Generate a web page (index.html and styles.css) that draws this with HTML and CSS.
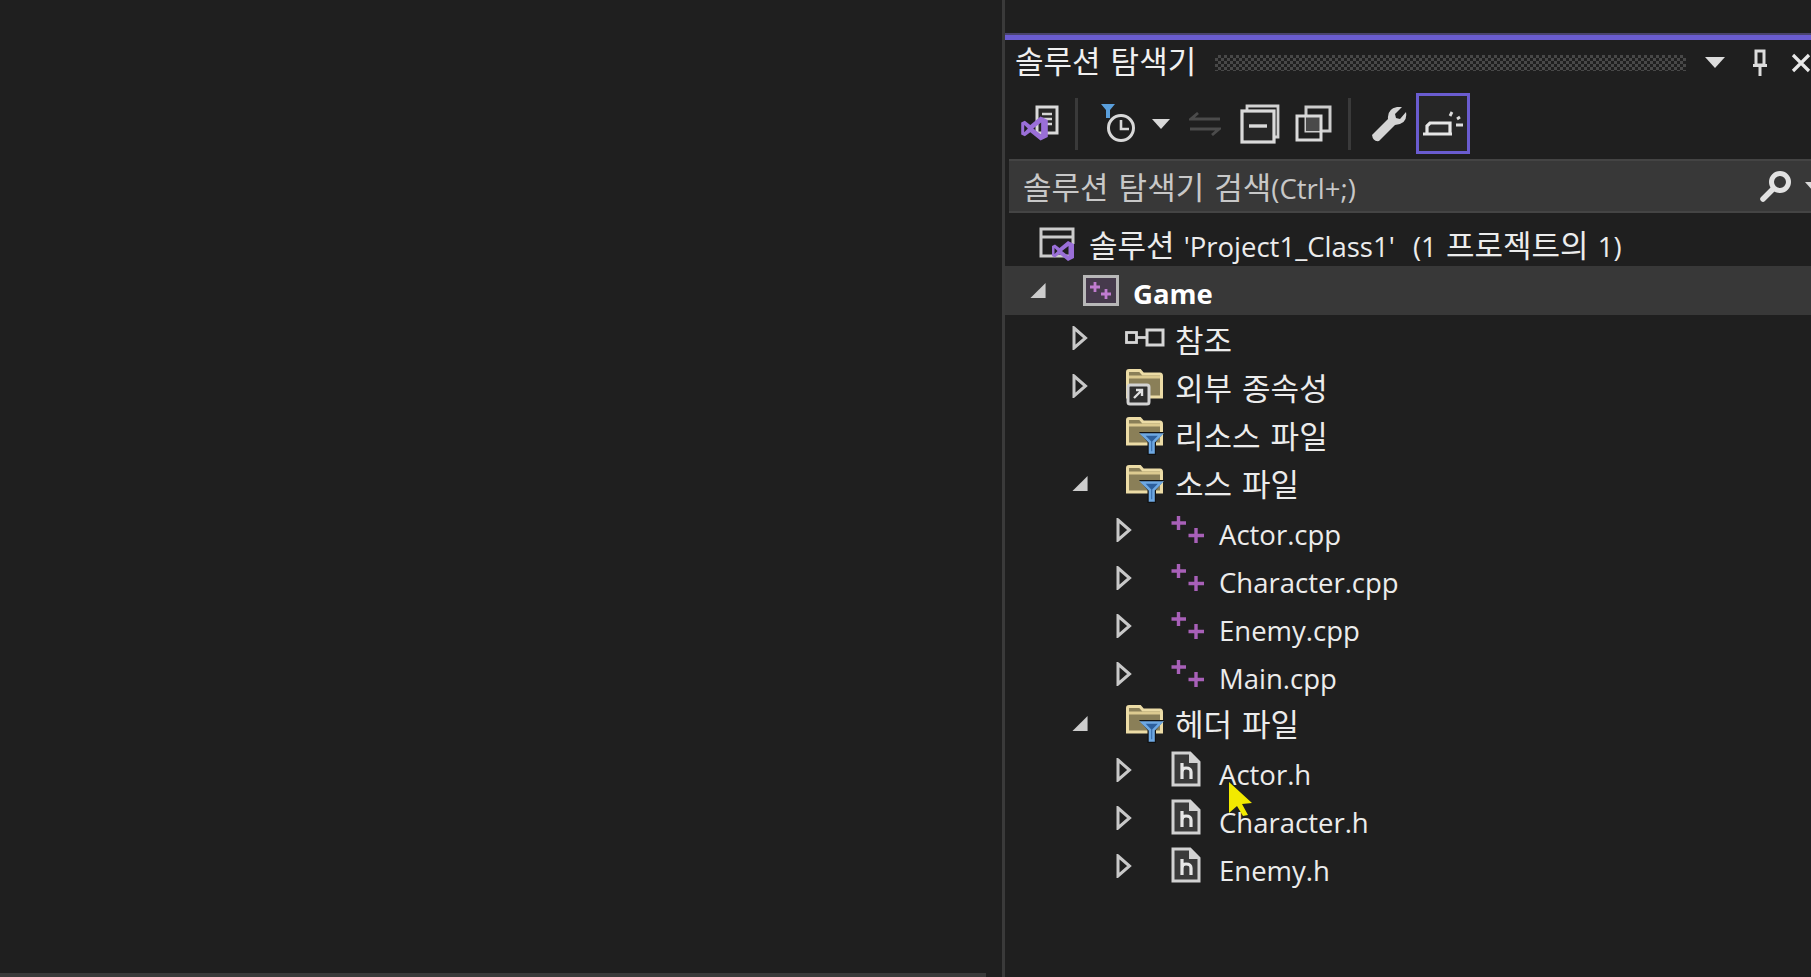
FILE: index.html
```html
<!DOCTYPE html>
<html lang="ko">
<head>
<meta charset="utf-8">
<title>솔루션 탐색기</title>
<link rel="stylesheet" href="styles.css">
</head>
<body>
<svg class="defs" aria-hidden="true">
  <symbol id="vs" viewBox="0 0 24 24"><path d="M17 2 L23 5 V19 L17 22 L8.500 15 L4 18.500 L1 17 V7 L4 5.500 L8.500 9 Z M17.500 7 L11 12 L17.500 17 Z M3.500 9 V15 L6.500 12 Z" fill="#9a6fd8" fill-rule="evenodd"/></symbol>
  <symbol id="tri-open" viewBox="0 0 18 18"><path d="M16.500 1 V17 H0.500 Z" fill="#cdcdcd"/></symbol>
  <symbol id="tri-closed" viewBox="0 0 16 24"><path d="M2 2 L13.500 12 L2 22 Z" fill="none" stroke="#c8c8c8" stroke-width="3"/></symbol>
  <symbol id="cpp" viewBox="0 0 36 32"><path d="M8.500 1 V15 M1.500 8 H16 M26 13 V28 M18.500 20.500 H34" stroke="#a860b8" stroke-width="3.400" fill="none"/></symbol>
  <symbol id="header" viewBox="0 0 30 36"><path d="M2 2 H19 L28 11 V34 H2 Z" fill="#3a3a3a" stroke="#d2d2d2" stroke-width="3"/><path d="M19 2 V11 H28" fill="#d2d2d2" stroke="#d2d2d2" stroke-width="2"/><path d="M11 12 V28 M11 21 Q11 17 15 17 Q20 17 20 21 V28" fill="none" stroke="#e6e6e6" stroke-width="3.200"/></symbol>
  <symbol id="folder-f" viewBox="0 0 38 38"><path d="M1.500 27 V3 Q1.500 1.500 3 1.500 H14 L17 5 H34 Q35.500 5 35.500 7 V27 Z" fill="#8a7f58" stroke="#ecdca6" stroke-width="3"/><path d="M3 8 H34" stroke="#dcca90" stroke-width="3"/><path d="M13 15 H38 L30 25 V38 H21.500 V25 Z" fill="#111"/><path d="M16.500 17.500 H35 L27.500 25 V35.500 H24 V25 Z" fill="#2d5f9c" stroke="#6ea8e2" stroke-width="2.600"/></symbol>
  <symbol id="clock" viewBox="0 0 38 42"><circle cx="20" cy="25" r="12.500" fill="none" stroke="#d8d8d8" stroke-width="3"/><path d="M20 17 V26 H28" fill="none" stroke="#d8d8d8" stroke-width="2.600"/><path d="M0 1 H14 L9 7 V15 H5 V7 Z" fill="#5a9fdc"/></symbol>
</svg>

<div class="editor">
  <div class="strip"></div>
</div>

<aside class="panel">
  <div class="accent"></div>

  <header class="title">
    <span class="title-text ko">솔루션 탐색기</span>
    <div class="grip"></div>
    <svg class="title-caret" viewBox="0 0 20 11"><path d="M0 0 H20 L10 11 Z" fill="#dcdcdc"/></svg>
    <svg class="title-pin" viewBox="0 0 18 28"><path d="M5 2 H13 V16 H5 Z M2 16.500 H16 M9 17 V27" fill="none" stroke="#dcdcdc" stroke-width="3"/></svg>
    <svg class="title-close" viewBox="0 0 20 20"><path d="M2 2 L18 18 M18 2 L2 18" stroke="#e8e8e8" stroke-width="3.200" fill="none"/></svg>
  </header>

  <nav class="toolbar">
    <svg class="t-home" viewBox="0 0 40 38">
      <path d="M17 2 H37 V28 H17 Z" fill="#262626" stroke="#dadada" stroke-width="3"/>
      <path d="M22 9 H32 M22 14 H32 M22 19 H32" stroke="#d4d4d4" stroke-width="2.600" fill="none"/>
      <use href="#vs" x="0" y="9" width="29" height="29"/>
    </svg>
    <div class="sep sep-a"></div>
    <svg class="t-clock"><use href="#clock"/></svg>
    <svg class="t-caret" viewBox="0 0 18 10"><path d="M0 0 H18 L9 10 Z" fill="#d8d8d8"/></svg>
    <svg class="t-sync" viewBox="0 0 32 24"><path d="M9 1 L2 7 H31 M23 23 L30 17 H1" fill="none" stroke="#4b4b4b" stroke-width="2.800"/></svg>
    <svg class="t-collapse" viewBox="0 0 40 40">
      <path d="M7 6 V2 H38 V33 H34" fill="none" stroke="#d2d2d2" stroke-width="2.800"/>
      <rect x="2" y="7" width="32" height="31" fill="#262626" stroke="#dadada" stroke-width="3.200"/>
      <path d="M9 22 H27" stroke="#dadada" stroke-width="3.400"/>
    </svg>
    <svg class="t-copy" viewBox="0 0 37 37">
      <rect x="11" y="2" width="24" height="24" fill="none" stroke="#cccccc" stroke-width="3"/>
      <rect x="11" y="11" width="15" height="15" fill="#4a4a4a"/>
      <rect x="2" y="11" width="24" height="24" fill="none" stroke="#dadada" stroke-width="3"/>
    </svg>
    <div class="sep sep-b"></div>
    <svg class="t-wrench" viewBox="0 0 36 36"><path d="M1 29 L17 13 Q16 3 26 1 L31 1 L24 8 L25 12 L29 13 L35 6 Q37 18 24 19 L8 35 Q2 36 1 29 Z" fill="#d4d4d4"/></svg>
    <button class="focus-btn">
      <svg class="t-focus" viewBox="0 0 42 26"><path d="M1 23 H30 M5 22 V15 L8 12 H28 V22" fill="#2c2c2c" stroke="#e6e6e6" stroke-width="3.200"/><path d="M28 5 L30 1 M35 8 L38 6 M34 14 H41" stroke="#dcdcdc" stroke-width="2.800" fill="none"/></svg>
    </button>
  </nav>

  <div class="search">
    <span class="search-text"><span class="ko">솔루션 탐색기 검색</span>(Ctrl+;)</span>
    <svg class="search-icon" viewBox="0 0 32 32"><circle cx="20" cy="12" r="8.500" fill="none" stroke="#e2e2e2" stroke-width="5"/><path d="M13 19 L3 29" stroke="#e2e2e2" stroke-width="5.500" stroke-linecap="round"/></svg>
    <svg class="search-caret" viewBox="0 0 16 9"><path d="M0 0 H16 L8 9 Z" fill="#d8d8d8"/></svg>
  </div>

  <ul class="tree">
    <li class="row row-solution">
      <svg class="ico-solution" viewBox="0 0 36 36">
        <path d="M30 29 H2 V2 H34 V17 M2 10 H34" fill="none" stroke="#cccccc" stroke-width="3"/>
        <use href="#vs" x="12" y="12" width="24" height="24"/>
      </svg>
      <span class="lbl lbl-solution"><span class="ko">솔루션</span> 'Project1_Class1' &nbsp;(1 <span class="ko">프로젝트의</span> 1)</span>
    </li>

    <li class="row row-project">
      <svg class="tw tw-open lv0-tw"><use href="#tri-open"/></svg>
      <svg class="ico-project" viewBox="0 0 36 31">
        <rect x="1.500" y="1.500" width="33" height="28" fill="#463a4c" stroke="#b8b8b8" stroke-width="3"/>
        <path d="M12 7 V17 M7 12 H17 M23 14 V24 M18 19 H28" stroke="#c07cd0" stroke-width="2.800" fill="none"/>
      </svg>
      <span class="lbl lbl-bold">Game</span>
    </li>

    <li class="row lv1">
      <svg class="tw tw-closed"><use href="#tri-closed"/></svg>
      <svg class="ico-ref" viewBox="0 0 40 20"><rect x="1.500" y="4.500" width="10" height="10" fill="none" stroke="#d6d6d6" stroke-width="2.800"/><path d="M12 9.500 H22" stroke="#d6d6d6" stroke-width="2.800"/><rect x="22" y="2" width="16" height="15" fill="none" stroke="#d6d6d6" stroke-width="3"/></svg>
      <span class="lbl lbl-ko ko">참조</span>
    </li>

    <li class="row lv1">
      <svg class="tw tw-closed"><use href="#tri-closed"/></svg>
      <svg class="ico-folder" viewBox="0 0 38 38">
        <path d="M1.500 24 V3 Q1.500 1.500 3 1.500 H14 L17 5 H34 Q35.500 5 35.500 7 V28 H1.500 Z" fill="#8a7f58" stroke="#ecdca6" stroke-width="3"/>
        <path d="M3 8 H34" stroke="#dcca90" stroke-width="3"/>
        <rect x="2" y="16" width="21" height="19" rx="2" fill="#2e2e2e" stroke="#d2d2d2" stroke-width="3"/>
        <path d="M8 29 L16 21 M10 21 H16 V27" fill="none" stroke="#e0e0e0" stroke-width="2.400"/>
      </svg>
      <span class="lbl lbl-ko ko">외부 종속성</span>
    </li>

    <li class="row lv1">
      <span class="tw"></span>
      <svg class="ico-folder"><use href="#folder-f"/></svg>
      <span class="lbl lbl-ko ko">리소스 파일</span>
    </li>

    <li class="row lv1">
      <svg class="tw tw-open"><use href="#tri-open"/></svg>
      <svg class="ico-folder"><use href="#folder-f"/></svg>
      <span class="lbl lbl-ko ko">소스 파일</span>
    </li>

    <li class="row lv2">
      <svg class="tw tw-closed"><use href="#tri-closed"/></svg>
      <svg class="ico-cpp"><use href="#cpp"/></svg>
      <span class="lbl lbl-file">Actor.cpp</span>
    </li>
    <li class="row lv2">
      <svg class="tw tw-closed"><use href="#tri-closed"/></svg>
      <svg class="ico-cpp"><use href="#cpp"/></svg>
      <span class="lbl lbl-file">Character.cpp</span>
    </li>
    <li class="row lv2">
      <svg class="tw tw-closed"><use href="#tri-closed"/></svg>
      <svg class="ico-cpp"><use href="#cpp"/></svg>
      <span class="lbl lbl-file">Enemy.cpp</span>
    </li>
    <li class="row lv2">
      <svg class="tw tw-closed"><use href="#tri-closed"/></svg>
      <svg class="ico-cpp"><use href="#cpp"/></svg>
      <span class="lbl lbl-file">Main.cpp</span>
    </li>

    <li class="row lv1">
      <svg class="tw tw-open"><use href="#tri-open"/></svg>
      <svg class="ico-folder"><use href="#folder-f"/></svg>
      <span class="lbl lbl-ko ko">헤더 파일</span>
    </li>

    <li class="row lv2">
      <svg class="tw tw-closed"><use href="#tri-closed"/></svg>
      <svg class="ico-h"><use href="#header"/></svg>
      <span class="lbl lbl-file">Actor.h</span>
    </li>
    <li class="row lv2">
      <svg class="tw tw-closed"><use href="#tri-closed"/></svg>
      <svg class="ico-h"><use href="#header"/></svg>
      <span class="lbl lbl-file">Character.h</span>
    </li>
    <li class="row lv2">
      <svg class="tw tw-closed"><use href="#tri-closed"/></svg>
      <svg class="ico-h"><use href="#header"/></svg>
      <span class="lbl lbl-file">Enemy.h</span>
    </li>
  </ul>
</aside>

<svg class="cursor" viewBox="0 0 24 34"><path d="M1 0 L24 21 L14 22 L20 33 L15 34 L9 24 L1 31 Z" fill="#f2ea00"/></svg>
</body>
</html>
```
FILE: styles.css
```css
* { box-sizing: border-box; }

html, body {
  margin: 0;
  height: 100%;
}

body {
  display: flex;
  width: 1811px;
  height: 977px;
  overflow: hidden;
  background: #1f1f1f;
  color: #ececec;
  font-family: "Open Sans", "Noto Sans CJK KR", sans-serif;
  font-size: 27.5px;
}

.ko {
  font-size: 31px;
  word-spacing: 2px;
}

.defs { display: none; }

.editor {
  flex: 0 0 1002px;
  display: flex;
  flex-direction: column;
  justify-content: flex-end;
}

.strip {
  width: 986px;
  height: 4px;
  background: #3a3a3a;
}

.panel {
  flex: 0 0 809px;
  border-left: 3px solid #3a3a3a;
  padding-top: 33px;
  overflow: hidden;
}

.accent {
  height: 7px;
  background: #6a5cd0;
  border-top: 2px solid #4a4470;
}

/* title */
.title {
  display: flex;
  align-items: center;
  height: 48px;
  padding-left: 10px;
}

.title-text {
  width: 200px;
  flex: none;
  white-space: nowrap;
  color: #f0f0f0;
  line-height: 1;
  padding-bottom: 6px;
}

.grip {
  width: 473px;
  height: 16px;
  margin-bottom: 3px;
  background: repeating-conic-gradient(#484848 0 25%, transparent 0 50%) 0 0 / 6px 6px;
}

.title-caret { width: 20px; height: 11px; margin-left: 19px; flex: none; margin-bottom: 3px; }
.title-pin { width: 18px; height: 28px; margin-left: 26px; flex: none; margin-bottom: 3px; }
.title-close { width: 20px; height: 20px; margin-left: 22px; flex: none; margin-bottom: 3px; }

/* toolbar */
.toolbar {
  display: flex;
  align-items: center;
  height: 71px;
  padding-left: 15px;
}

.t-home { width: 40px; height: 38px; flex: none; }
.sep { width: 3px; height: 52px; background: #3a3a3a; flex: none; }
.sep-a { margin-left: 15px; }
.t-clock { width: 38px; height: 42px; margin-left: 23px; flex: none; }
.t-caret { width: 18px; height: 10px; margin-left: 13px; flex: none; }
.t-sync { width: 32px; height: 24px; margin-left: 19px; flex: none; }
.t-collapse { width: 40px; height: 40px; margin-left: 19px; flex: none; }
.t-copy { width: 37px; height: 37px; margin-left: 15px; flex: none; }
.sep-b { margin-left: 16px; }
.t-wrench { width: 36px; height: 36px; margin-left: 20px; flex: none; }

.focus-btn {
  display: flex;
  align-items: center;
  justify-content: center;
  width: 54px;
  height: 61px;
  margin-left: 9px;
  padding: 0;
  flex: none;
  background: #262626;
  border: 3px solid #6a5cd0;
}

.t-focus { width: 42px; height: 26px; }

/* search */
.search {
  display: flex;
  align-items: center;
  height: 54px;
  margin-left: 4px;
  padding-left: 14px;
  background: #383838;
  border-top: 2px solid #444;
  border-bottom: 2px solid #444;
}

.search-text {
  width: 737px;
  flex: none;
  white-space: nowrap;
  color: #c8c8c8;
  line-height: 1;
  padding-top: 2px;
}

.search-icon { width: 32px; height: 32px; flex: none; }
.search-caret { width: 16px; height: 9px; margin-left: 13px; flex: none; }

/* tree */
.tree {
  list-style: none;
  margin: 0;
  padding: 0;
}

.row {
  display: flex;
  align-items: center;
  height: 48px;
  white-space: nowrap;
}

.lbl { line-height: 1; }
.lbl-ko { padding-top: 3px; }
.lbl-file { padding-top: 8px; }
.lbl-solution { padding-top: 2px; word-spacing: 2px; }
.lbl-bold { font-weight: 700; color: #fff; padding-top: 6px; }

.row-solution {
  height: 53px;
  padding: 10px 0 0 34px;
}

.ico-solution { width: 36px; height: 36px; margin-right: 14px; flex: none; }

.row-project {
  height: 49px;
  padding-left: 25px;
  background: #383838;
}

.lv0-tw { margin-right: 36px; }
.ico-project { width: 36px; height: 31px; margin-right: 14px; flex: none; }

.lv1 { padding-left: 67px; }
.lv2 { padding-left: 111px; }

.tw { display: block; flex: none; width: 17px; height: 17px; }
.tw-closed { width: 16px; height: 24px; margin-bottom: 2px; }

.lv1 .tw { margin-right: 37px; }
.lv1 .tw-closed { margin-right: 38px; }
.lv2 .tw { margin-right: 38px; }

.ico-ref { width: 40px; height: 20px; margin-right: 10px; flex: none; margin-left: -1px; margin-bottom: 2px; }
.ico-folder { width: 38px; height: 38px; margin-right: 11px; flex: none; margin-top: 2px; }
.ico-cpp { width: 36px; height: 32px; margin-right: 13px; flex: none; }
.ico-h { width: 30px; height: 36px; margin-right: 18px; margin-left: 1px; flex: none; margin-bottom: 4px; }

.cursor {
  position: absolute;
  left: 1228px;
  top: 782px;
  width: 24px;
  height: 34px;
}
```
